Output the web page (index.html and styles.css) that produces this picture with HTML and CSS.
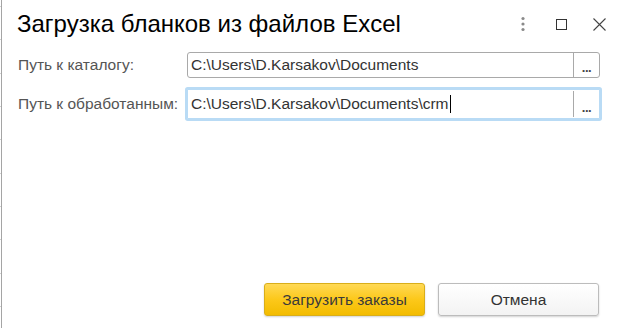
FILE: index.html
```html
<!DOCTYPE html>
<html lang="ru">
<head>
<meta charset="utf-8">
<title>Загрузка бланков из файлов Excel</title>
<link rel="stylesheet" href="styles.css">
</head>
<body>
<div class="window">
  <div class="header">
    <h1 class="title">Загрузка бланков из файлов Excel</h1>
    <div class="controls">
      <span class="ctl ctl-more">
        <svg width="6" height="16" viewBox="0 0 6 16"><circle cx="3" cy="2.5" r="1.6" fill="#8a8a8a"/><circle cx="3" cy="8" r="1.6" fill="#8a8a8a"/><circle cx="3" cy="13.5" r="1.6" fill="#8a8a8a"/></svg>
      </span>
      <span class="ctl ctl-max">
        <svg width="11" height="11" viewBox="0 0 11 11"><rect x="0.5" y="0.5" width="10" height="10" fill="none" stroke="#333" stroke-width="1"/></svg>
      </span>
      <span class="ctl ctl-close">
        <svg width="13" height="13" viewBox="0 0 13 13"><path d="M0.5 0.5 L12.5 12.5 M12.5 0.5 L0.5 12.5" stroke="#444" stroke-width="1.1" fill="none"/></svg>
      </span>
    </div>
  </div>
  <div class="form">
    <div class="row row-first">
      <label class="label">Путь к каталогу:</label>
      <div class="field">
        <span class="value">C:\Users\D.Karsakov\Documents</span>
        <span class="pick">...</span>
      </div>
    </div>
    <div class="row row-second">
      <label class="label">Путь к обработанным:</label>
      <div class="field field-focus">
        <span class="value">C:\Users\D.Karsakov\Documents\crm<span class="caret"></span></span>
        <span class="pick">...</span>
      </div>
    </div>
  </div>
  <div class="footer">
    <button class="btn btn-primary">Загрузить заказы</button>
    <button class="btn">Отмена</button>
  </div>
</div>
</body>
</html>
```

FILE: styles.css
```css
html, body {
  margin: 0;
  padding: 0;
  background: #fff;
}
body {
  font-family: "Liberation Sans", Arial, sans-serif;
}
.window {
  width: 615px;
  height: 328px;
  margin-left: 1px;
  border-left: 1px solid #a5a5a5;
  box-sizing: border-box;
  display: flex;
  flex-direction: column;
  background: #fff;
  position: relative;
}
.window::before {
  content: "";
  position: absolute;
  left: -2px;
  top: 0;
  width: 1px;
  height: 100%;
  background: repeating-linear-gradient(to bottom, transparent 0, transparent 6px, #d2d2d2 6px, #d2d2d2 7px, transparent 7px, transparent 33.33px);
}
.header {
  height: 49px;
  display: flex;
  align-items: flex-start;
  justify-content: space-between;
}
.title {
  margin: 10px 0 0 15px;
  font-size: 24px;
  line-height: 28px;
  font-weight: normal;
  color: #000;
}
.controls {
  display: flex;
  align-items: center;
  margin-top: 16px;
  margin-right: 10px;
}
.ctl {
  display: flex;
  align-items: center;
  justify-content: center;
}
.ctl-more { width: 6px; margin-right: 30px; }
.ctl-max { width: 11px; margin-right: 26px; }
.ctl-close { width: 13px; }
.form {
  display: flex;
  flex-direction: column;
  padding-left: 16px;
}
.row {
  display: flex;
  align-items: center;
}
.row-first {
  margin-top: 3px;
}
.row-second {
  margin-top: 11px;
}
.label {
  width: 169px;
  font-size: 15.5px;
  color: #555;
  white-space: nowrap;
}
.field {
  width: 413px;
  height: 26px;
  box-sizing: border-box;
  border: 1px solid #a9a9a9;
  border-radius: 3px;
  display: flex;
  align-items: center;
  background: #fff;
}
.field-focus {
  height: 30px;
  border-color: #b9dbf5;
  border-radius: 1px;
  box-shadow: 0 0 0 2px #b9dbf5;
}
.value {
  flex: 1;
  padding-left: 3px;
  font-size: 15.5px;
  color: #333;
  white-space: nowrap;
  display: flex;
  align-items: center;
}
.caret {
  display: inline-block;
  width: 1px;
  height: 18px;
  background: #000;
  margin-left: 1px;
}
.pick {
  width: 25px;
  align-self: stretch;
  border-left: 1px solid #a9a9a9;
  display: flex;
  align-items: flex-end;
  justify-content: center;
  font-size: 13px;
  font-weight: bold;
  color: #444;
  line-height: 18px;
  letter-spacing: -0.5px;
}
.field-focus .pick {
  margin: 1px 0 1px;
}
.footer {
  margin-top: auto;
  margin-bottom: 12px;
  display: flex;
  justify-content: flex-end;
  gap: 13px;
  padding-right: 17px;
}
.btn {
  width: 161px;
  height: 33px;
  box-sizing: border-box;
  border: 1px solid #bcbcbc;
  border-radius: 3px;
  background: linear-gradient(to bottom, #ffffff 0%, #f3f3f3 100%);
  box-shadow: 0 1px 2px rgba(0,0,0,0.18);
  font-family: "Liberation Sans", Arial, sans-serif;
  font-size: 15.5px;
  color: #333;
  padding: 0;
}
.btn-primary {
  border-color: #d9ae1a;
  background: linear-gradient(to bottom, #ffd955 0%, #fcc81a 50%, #f3bc00 100%);
  color: #3a3a3a;
}
```
